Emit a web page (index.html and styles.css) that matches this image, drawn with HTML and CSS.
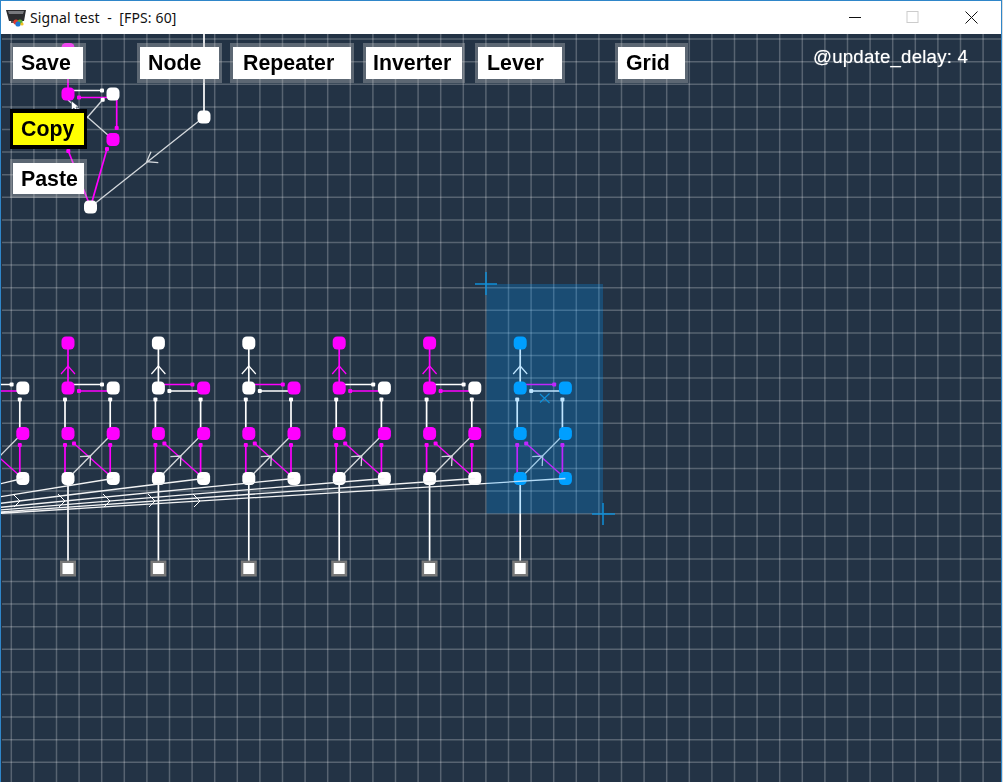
FILE: index.html
```html
<!DOCTYPE html>
<html lang="en">
<head>
    <meta charset="UTF-8">
    <meta name="viewport" content="width=device-width, initial-scale=1.0">
    <title>Signal test</title>
    <link rel="stylesheet" href="styles.css">
</head>
<body>
    <div class="window">
        <header class="titlebar">
            <svg class="app_icon" width="20" height="17" viewBox="0 0 20 17">
                <polygon points="0,0 20,0 18,11 3,11" fill="#2b2b2e" />
                <polygon points="2,1 18,1 17,4 3,4" fill="#77787c" />
                <rect x="5" y="11" width="10" height="2" fill="#55565a" />
                <circle cx="10" cy="12" r="2.6" fill="#e23b2e" />
                <circle cx="14" cy="12" r="2.6" fill="#58b135" />
                <circle cx="12" cy="14" r="2.6" fill="#1f77d4" />
                <circle cx="16" cy="14" r="1.6" fill="#f3c21b" />
            </svg>
            <span class="title">Signal test  -  [FPS: 60]</span>
            <div class="window_buttons">
                <div class="window_button">
                    <svg width="13" height="13" viewBox="0 0 13 13"><line class="glyph" x1="0" y1="6.5" x2="12" y2="6.5" /></svg>
                </div>
                <div class="window_button window_button--max">
                    <svg width="13" height="13" viewBox="0 0 13 13"><rect class="glyph glyph--off" x="1" y="0.5" width="11" height="11" /></svg>
                </div>
                <div class="window_button">
                    <svg width="13" height="13" viewBox="0 0 13 13"><path class="glyph" d="M0.5 0.5 L12.5 12.5 M12.5 0.5 L0.5 12.5" /></svg>
                </div>
            </div>
        </header>

        <main class="stage">
            <svg class="board" width="1000" height="748" viewBox="1 34 1000 748">
                <defs>
                    <g id="cell">
                        <line class="wire wire--top" x1="0" y1="343" x2="0" y2="388" />
                        <path class="arrow arrow--top" d="M-7 374 L0 366 L7 374" />

                        <line class="wire wire--a" x1="0" y1="384.5" x2="34" y2="384.5" />
                        <rect class="dot dot--a" x="32" y="382.5" width="4" height="4" />
                        <line class="wire wire--b" x1="45.2" y1="391" x2="11" y2="391" />
                        <rect class="dot dot--b" x="9" y="389" width="4" height="4" />

                        <line class="wire wire--white" x1="-3" y1="433" x2="-3" y2="399.5" />
                        <rect class="dot dot--white" x="-5" y="397.5" width="4" height="4" />
                        <line class="wire wire--white" x1="42.2" y1="433" x2="42.2" y2="399.5" />
                        <rect class="dot dot--white" x="40.2" y="397.5" width="4" height="4" />

                        <line class="wire wire--pink" x1="-3" y1="478" x2="-3" y2="445" />
                        <rect class="dot dot--pink" x="-5" y="443" width="4" height="4" />
                        <line class="wire wire--pink" x1="42.2" y1="478" x2="42.2" y2="445" />
                        <rect class="dot dot--pink" x="40.2" y="443" width="4" height="4" />

                        <line class="wire wire--pink wire--thin" x1="45.2" y1="478.5" x2="6" y2="443.5" />
                        <rect class="dot dot--pink" x="4" y="441.5" width="4" height="4" />
                        <line class="thin" x1="0" y1="478.5" x2="42" y2="436" />
                        <path class="thin" d="M12 456.7 L22.5 456 L22 466" />

                        <line class="wire wire--white" x1="0" y1="478.5" x2="0" y2="568" />
                        <rect class="lever_edge" x="-8" y="560.5" width="16" height="16" />
                        <rect class="lever" x="-5.5" y="563" width="11" height="11" />

                        <rect class="node node--top" x="-6.5" y="336.5" width="13" height="13" />
                        <rect class="node node--a" x="-6.5" y="381.5" width="13" height="13" />
                        <rect class="node node--b" x="38.7" y="381.5" width="13" height="13" />
                        <rect class="node node--c" x="-6.5" y="427" width="13" height="13" />
                        <rect class="node node--d" x="38.7" y="427" width="13" height="13" />
                        <rect class="node node--e" x="-6.5" y="472" width="13" height="13" />
                        <rect class="node node--f" x="38.7" y="472" width="13" height="13" />
                    </g>
                </defs>

                <!-- grid: one wide dashed line each way -->
                <line class="grid" x1="-12.05" y1="408" x2="1003" y2="408" stroke-width="748" />
                <line class="grid" x1="502" y1="15.75" x2="502" y2="782" stroke-width="1000" />

                <!-- cells -->
                <use class="cell--on" href="#cell" x="-22.4" />
                <use class="cell--on" href="#cell" x="68" />
                <use class="cell--off" href="#cell" x="158.4" />
                <use class="cell--off" href="#cell" x="248.8" />
                <use class="cell--on" href="#cell" x="339.2" />
                <use class="cell--on" href="#cell" x="429.6" />
                <use class="cell--off cell--picked" href="#cell" x="520.2" />

                <!-- bus to the node off screen -->
                <path class="bus" d="M22.6 478.5 L-165 523.5 M113 478.5 L-165 523.5 M203.6 478.5 L-165 523.5 M294 478.5 L-165 523.5 M384.4 478.5 L-165 523.5 M474.8 478.5 L-165 523.5 M565.4 478.5 L-165 523.5" />
                <path class="bus_arrow" d="M13 494 L20 501 L14 507 M58 494 L65 501 L59 507 M103 494 L110 501 L104 507 M148 494 L155 501 L149 507 M193 494 L200 501 L194 507" />

                <!-- group behind the buttons -->
                <g>
                    <line class="wire wire--white" x1="204" y1="34" x2="204" y2="117" />
                    <line class="thin" x1="204" y1="117" x2="90.5" y2="207" />
                    <path class="thin" d="M151 151.7 L146.7 161.7 L158.3 162.7" />
                    <line class="wire wire--pink-top" x1="68" y1="48" x2="68" y2="94" />
                    <line class="wire wire--white" x1="68" y1="90.5" x2="102" y2="90.5" />
                    <rect class="dot dot--white" x="100" y="88.5" width="4" height="4" />
                    <line class="wire wire--pink-top" x1="113" y1="97.5" x2="79" y2="97.5" />
                    <rect class="dot dot--pink-top" x="77" y="95.5" width="4" height="4" />
                    <line class="wire wire--pink-top" x1="116.7" y1="97" x2="116.7" y2="128" />
                    <rect class="dot dot--pink-top" x="114.7" y="126" width="4" height="4" />
                    <line class="thin" x1="113" y1="139.5" x2="68" y2="100" />
                    <line class="thin" x1="102.7" y1="99.7" x2="68" y2="139.5" />
                    <rect class="dot dot--white" x="100.7" y="97.7" width="4" height="4" />
                    <line class="wire wire--pink-top" x1="90.5" y1="207" x2="68.3" y2="151" />
                    <rect class="dot dot--pink-top" x="66.3" y="149" width="4" height="4" />
                    <line class="wire wire--pink-top" x1="90.5" y1="207" x2="107" y2="149" />
                    <rect class="dot dot--pink-top" x="105" y="147" width="4" height="4" />
                    <rect class="node node--pink" x="61.5" y="43" width="13" height="13" />
                    <rect class="node node--pink" x="61.5" y="87.5" width="13" height="13" />
                    <rect class="node node--white" x="106.5" y="87.5" width="13" height="13" />
                    <rect class="node node--pink" x="106.5" y="133" width="13" height="13" />
                    <rect class="node node--white" x="197.5" y="110.5" width="13" height="13" />
                    <rect class="node node--white" x="84" y="200.5" width="13" height="13" />
                    <polygon class="pointer" points="71.5,101 71.5,110 74,108 76,112 78,111 76,107 79,107" />
                </g>

                <!-- selection -->
                <rect class="selection" x="486.5" y="284" width="116.5" height="229.5" />
                <path class="cross" d="M475 284 H497 M486 272 V295" />
                <path class="cross" d="M592 514 H615 M603 503 V525" />
                <path class="cross cross--small" d="M540 394 L549.5 403 M549.5 393.5 L540 402.5" />
            </svg>

            <nav class="toolbar">
                <button class="tool tool--save">Save</button>
                <button class="tool tool--node">Node</button>
                <button class="tool tool--repeater">Repeater</button>
                <button class="tool tool--inverter">Inverter</button>
                <button class="tool tool--lever">Lever</button>
                <button class="tool tool--grid">Grid</button>
                <span class="update_delay">@update_delay: 4</span>
            </nav>

            <nav class="sidebar">
                <button class="tool tool--copy tool--active">Copy</button>
                <button class="tool tool--paste">Paste</button>
            </nav>
        </main>
    </div>
</body>
</html>
```

FILE: styles.css
```css
*{
    margin: 0;
    padding: 0;
    box-sizing: border-box;
}
html, body{
    height: 100%;
    overflow: hidden;
}
body{
    background: #dcdcdc;
    font-family: "Liberation Sans", Arial, sans-serif;
}
.window{
    display: flex;
    flex-direction: column;
    width: 1002px;
    height: 782px;
    border: 1px solid #2f86c9;
    border-bottom: 0;
}

/* title bar */
.titlebar{
    display: flex;
    align-items: center;
    flex: 0 0 33px;
    padding-left: 5px;
    background: #ffffff;
}
.app_icon{
    margin-top: 1px;
}
.title{
    margin-left: 4px;
    font-family: "Noto Sans", sans-serif;
    font-size: 14px;
    letter-spacing: 0.12px;
    color: #111111;
    white-space: pre;
}
.window_buttons{
    display: flex;
    margin-left: auto;
    padding-right: 1px;
}
.window_button{
    display: flex;
    align-items: center;
    justify-content: center;
    width: 58px;
    height: 33px;
}
.window_button--max svg{
    margin-right: 2px;
}
.glyph{
    fill: none;
    stroke: #111111;
    stroke-width: 1;
}
.glyph--off{
    stroke: #cccccc;
}

/* board */
.stage{
    position: relative;
    flex: 1;
    overflow: hidden;
    background: #233345;
    filter: blur(0.4px);
}
.board{
    position: absolute;
    top: 0;
    left: 0;
    display: block;
}
.grid{
    stroke: rgba(255, 255, 255, 0.24);
    stroke-dasharray: 1.5 21.1;
}

.cell--on{
    --top: #ff00ff;
    --a: #ff00ff;
    --b: #ffffff;
    --wire-a: #ffffff;
    --wire-b: #ff00ff;
    --c: #ff00ff;
    --d: #ff00ff;
    --e: #ffffff;
    --f: #ffffff;
}
.cell--off{
    --top: #ffffff;
    --a: #ffffff;
    --b: #ff00ff;
    --wire-a: #ff00ff;
    --wire-b: #ffffff;
    --c: #ff00ff;
    --d: #ff00ff;
    --e: #ffffff;
    --f: #ffffff;
}
.cell--picked{
    --top: #00a2ff;
    --a: #00a2ff;
    --b: #00a2ff;
    --c: #00a2ff;
    --d: #00a2ff;
    --e: #00a2ff;
    --f: #00a2ff;
    --arrow: #ffffff;
    --line: #ffffff;
}

.wire{
    stroke-width: 1.7;
}
.wire--thin{
    stroke-width: 1.3;
}
.wire--white{
    stroke: #ffffff;
}
.wire--pink, .wire--pink-top{
    stroke: #ff00ff;
}
.wire--top{
    stroke: var(--line, var(--top));
}
.wire--a{
    stroke: var(--wire-a);
}
.wire--b{
    stroke: var(--wire-b);
}
.arrow{
    fill: none;
    stroke-width: 1.2;
}
.arrow--top{
    stroke: var(--arrow, var(--top));
}
.thin{
    fill: none;
    stroke: #d5d9dd;
    stroke-width: 1.3;
}
.dot{
    rx: 1;
}
.dot--white{
    fill: #ffffff;
}
.dot--pink, .dot--pink-top{
    fill: #ff00ff;
}
.dot--a{
    fill: var(--wire-a);
}
.dot--b{
    fill: var(--wire-b);
}
.node{
    rx: 4.5;
}
.node--pink{
    fill: #ff00ff;
}
.node--white{
    fill: #ffffff;
}
.node--top{
    fill: var(--top);
}
.node--a{
    fill: var(--a);
}
.node--b{
    fill: var(--b);
}
.node--c{
    fill: var(--c);
}
.node--d{
    fill: var(--d);
}
.node--e{
    fill: var(--e);
}
.node--f{
    fill: var(--f);
}
.lever_edge{
    fill: #787878;
}
.lever{
    fill: #ffffff;
}
.bus{
    fill: none;
    stroke: #f2f3f4;
    stroke-width: 1.3;
}
.bus_arrow{
    fill: none;
    stroke: #ffffff;
    stroke-width: 1;
}
.pointer{
    fill: #ffffff;
    stroke: #233345;
    stroke-width: 0.5;
}
.selection{
    fill: rgba(0, 150, 255, 0.25);
}
.cross{
    fill: none;
    stroke: #0f8fd8;
    stroke-width: 1.5;
}
.cross--small{
    stroke-width: 1.2;
}

/* buttons */
.toolbar{
    position: absolute;
    top: 9px;
    left: 9px;
    right: 0;
    display: flex;
    align-items: flex-start;
}
.sidebar{
    position: absolute;
    top: 75px;
    left: 9px;
    display: flex;
    flex-direction: column;
    gap: 10px;
}
.tool{
    height: 40px;
    padding-left: 8px;
    border: solid rgba(200, 200, 200, 0.35);
    border-width: 4px 3px;
    background: #ffffff;
    background-clip: padding-box;
    color: #000000;
    font-family: "Liberation Sans", Arial, sans-serif;
    font-size: 21.33px;
    font-weight: bold;
    line-height: 30px;
    text-align: left;
}
.tool--active{
    border-color: #000000;
    background: #ffff00;
    background-clip: padding-box;
}
.tool--save{
    width: 76px;
}
.tool--node{
    width: 85px;
    margin-left: 51px;
}
.tool--repeater{
    width: 124px;
    margin-left: 8px;
    padding-left: 10px;
}
.tool--inverter{
    width: 102px;
    margin-left: 9px;
    padding-left: 7px;
}
.tool--lever{
    width: 90px;
    margin-left: 10px;
    padding-left: 9px;
}
.tool--grid{
    width: 73px;
    margin-left: 50px;
}
.tool--copy{
    width: 77px;
}
.tool--paste{
    width: 77px;
    height: 39px;
}
.update_delay{
    margin-left: auto;
    margin-right: 33px;
    color: #ffffff;
    font-size: 18.67px;
    letter-spacing: 0.2px;
    line-height: 28px;
    text-shadow: 0 0 1px rgba(255, 255, 255, 0.6);
}
```
